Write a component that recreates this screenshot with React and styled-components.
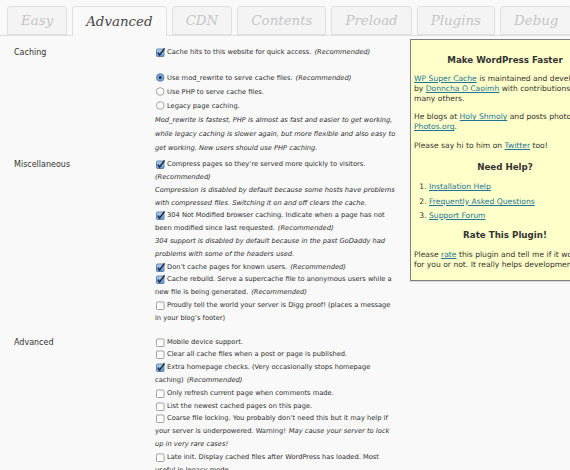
import React from "react";
import styled, { createGlobalStyle } from "styled-components";

const GlobalStyle = createGlobalStyle`
  html, body {
    margin: 0;
    padding: 0;
    overflow: hidden;
    background: #f9f9f9;
  }
  body {
    font-family: "DejaVu Sans", Verdana, sans-serif;
    color: #333;
  }
`;

const tabs = ["Easy", "Advanced", "CDN", "Contents", "Preload", "Plugins", "Debug"];

const Page = styled.div`
  width: 570px;
  height: 470px;
  overflow: hidden;
  background: #f9f9f9;
`;

const TabBar = styled.div`
  display: flex;
  gap: 5px;
  padding: 6px 0 0 7px;
  border-bottom: 1px solid #dfdfdf;
  height: 29px;
  box-sizing: content-box;
`;

const Tab = styled.div`
  box-sizing: border-box;
  height: ${({ $active }) => ($active ? "30px" : "29px")};
  margin-bottom: ${({ $active }) => ($active ? "-1px" : "0")};
  padding: 0 ${({ $pad }) => $pad}px;
  display: flex;
  align-items: center;
  border: 1px solid #dfdfdf;
  border-bottom: ${({ $active }) => ($active ? "none" : "1px solid #dfdfdf")};
  border-radius: 3px 3px 0 0;
  background: ${({ $active }) => ($active ? "#f9f9f9" : "#f4f4f4")};
  font-family: "DejaVu Serif", Georgia, serif;
  font-style: italic;
  font-size: 13.4px;
  color: ${({ $active }) => ($active ? "#464646" : "#c5c5c5")};
  white-space: nowrap;
`;

const Body = styled.div`
  display: flex;
  align-items: flex-start;
`;

const Settings = styled.div`
  width: 410px;
  flex-shrink: 0;
  padding-top: 10px;
`;

const Section = styled.div`
  display: flex;
  margin-top: ${({ $space }) => $space}px;
`;

const Label = styled.div`
  width: 155px;
  flex-shrink: 0;
  box-sizing: border-box;
  padding-left: 14px;
  font-size: 8px;
  line-height: 13px;
  color: #333;
`;

const Content = styled.div`
  flex: 1;
  font-size: 6.7px;
  color: #2e2e2e;
`;

const Group = styled.div`
  margin-top: ${({ $space = 0 }) => $space}px;
`;

const Line = styled.div`
  white-space: nowrap;
  line-height: ${({ $h = 12.8 }) => $h}px;
  height: ${({ $h = 12.8 }) => $h}px;
  display: flex;
  align-items: center;
`;

const Em = styled.em`
  font-style: italic;
  margin-left: ${({ $gap = 0 }) => $gap}px;
`;

const BoxWrap = styled.span`
  display: inline-block;
  width: 9px;
  height: 9px;
  margin-right: 2px;
  margin-left: 1px;
  flex-shrink: 0;
`;

const Checkbox = ({ checked }) => (
  <BoxWrap>
    <svg width="9" height="9" viewBox="0 0 9 9">
      <defs>
        <linearGradient id="cbblue" x1="0" y1="0" x2="0" y2="1">
          <stop offset="0" stopColor="#b9d4f0" />
          <stop offset="1" stopColor="#5d95d4" />
        </linearGradient>
      </defs>
      <rect
        x="0.5"
        y="1"
        width="7.5"
        height="7.5"
        rx="1"
        fill={checked ? "url(#cbblue)" : "#fff"}
        stroke={checked ? "#4e6e98" : "#8a8a8a"}
        strokeWidth="0.8"
      />
      {checked && (
        <path d="M1.8 4.6 L3.6 7 L8.6 0.3" fill="none" stroke="#1d2c45" strokeWidth="1.5" />
      )}
    </svg>
  </BoxWrap>
);

const Radio = ({ checked }) => (
  <BoxWrap>
    <svg width="9" height="9" viewBox="0 0 9 9">
      <circle
        cx="4.2"
        cy="4.5"
        r="3.8"
        fill={checked ? "#7aa9df" : "#fff"}
        stroke={checked ? "#4e6e98" : "#8a8a8a"}
        strokeWidth="0.8"
      />
      {checked && <circle cx="4.2" cy="4.5" r="1.5" fill="#1d2c45" />}
    </svg>
  </BoxWrap>
);

const Sidebar = styled.div`
  margin-top: 3px;
  width: 190px;
  flex-shrink: 0;
  box-sizing: border-box;
  background: #ffffc9;
  border: 1px solid #808080;
  box-shadow: 0 1px 1px rgba(0, 0, 0, 0.12);
  padding: 1px 3px 10px 3px;
  font-size: 7.6px;
  line-height: 10px;
  color: #333;
  white-space: nowrap;
`;

const Heading = styled.h3`
  margin: ${({ $top }) => $top}px 0 0;
  text-align: center;
  font-size: 8.7px;
  line-height: 12px;
  font-weight: bold;
  color: #333;
`;

const Para = styled.p`
  margin: ${({ $top = 8.5 }) => $top}px 0 0;
`;

const Link = styled.a`
  color: #21759b;
  text-decoration: underline;
`;

const HelpList = styled.ol`
  margin: 9px 0 0;
  padding-left: 15px;
`;

const HelpItem = styled.li`
  line-height: 10px;
  margin-bottom: 4.2px;
`;

const App = () => {
  return (
    <Page>
      <GlobalStyle />
      <TabBar>
        {tabs.map((t) => (
          <Tab key={t} $active={t === "Advanced"} $pad={13}>
            {t}
          </Tab>
        ))}
      </TabBar>
      <Body>
        <Settings>
          <Section $space={0}>
            <Label>Caching</Label>
            <Content>
              <Line $h={13}>
                <Checkbox checked />
                Cache hits to this website for quick access.
                <Em $gap={3}>(Recommended)</Em>
              </Line>
              <Group $space={11.5}>
                <Line $h={14}>
                  <Radio checked />
                  Use mod_rewrite to serve cache files.
                  <Em $gap={3}>(Recommended)</Em>
                </Line>
                <Line $h={14}>
                  <Radio />
                  Use PHP to serve cache files.
                </Line>
                <Line $h={14}>
                  <Radio />
                  Legacy page caching.
                </Line>
                <Line $h={14}>
                  <Em>Mod_rewrite is fastest, PHP is almost as fast and easier to get working,</Em>
                </Line>
                <Line $h={14}>
                  <Em>while legacy caching is slower again, but more flexible and also easy to</Em>
                </Line>
                <Line $h={14}>
                  <Em>get working. New users should use PHP caching.</Em>
                </Line>
              </Group>
            </Content>
          </Section>

          <Section $space={3.8}>
            <Label>Miscellaneous</Label>
            <Content>
              <Line>
                <Checkbox checked />
                Compress pages so they’re served more quickly to visitors.
              </Line>
              <Line>
                <Em>(Recommended)</Em>
              </Line>
              <Line>
                <Em>Compression is disabled by default because some hosts have problems</Em>
              </Line>
              <Line>
                <Em>with compressed files. Switching it on and off clears the cache.</Em>
              </Line>
              <Line>
                <Checkbox checked />
                304 Not Modified browser caching. Indicate when a page has not
              </Line>
              <Line>
                been modified since last requested.
                <Em $gap={3}>(Recommended)</Em>
              </Line>
              <Line>
                <Em>304 support is disabled by default because in the past GoDaddy had</Em>
              </Line>
              <Line>
                <Em>problems with some of the headers used.</Em>
              </Line>
              <Line>
                <Checkbox checked />
                Don’t cache pages for known users.
                <Em $gap={3}>(Recommended)</Em>
              </Line>
              <Line>
                <Checkbox checked />
                Cache rebuild. Serve a supercache file to anonymous users while a
              </Line>
              <Line>
                new file is being generated.
                <Em $gap={3}>(Recommended)</Em>
              </Line>
              <Line>
                <Checkbox />
                Proudly tell the world your server is Digg proof! (places a message
              </Line>
              <Line>in your blog’s footer)</Line>
            </Content>
          </Section>

          <Section $space={11}>
            <Label>Advanced</Label>
            <Content>
              <Line>
                <Checkbox />
                Mobile device support.
              </Line>
              <Line>
                <Checkbox />
                Clear all cache files when a post or page is published.
              </Line>
              <Line>
                <Checkbox checked />
                Extra homepage checks. (Very occasionally stops homepage
              </Line>
              <Line>
                caching)
                <Em $gap={3}>(Recommended)</Em>
              </Line>
              <Line>
                <Checkbox />
                Only refresh current page when comments made.
              </Line>
              <Line>
                <Checkbox />
                List the newest cached pages on this page.
              </Line>
              <Line>
                <Checkbox />
                Coarse file locking. You probably don’t need this but it may help if
              </Line>
              <Line>
                your server is underpowered. Warning!
                <Em $gap={3}>May cause your server to lock</Em>
              </Line>
              <Line>
                <Em>up in very rare cases!</Em>
              </Line>
              <Line>
                <Checkbox />
                Late init. Display cached files after WordPress has loaded. Most
              </Line>
              <Line>useful in legacy mode.</Line>
            </Content>
          </Section>
        </Settings>

        <Sidebar>
          <Heading $top={12.6}>Make WordPress Faster</Heading>
          <Para $top={8.4}>
            <Link>WP Super Cache</Link> is maintained and developed
            <br />
            by <Link>Donncha O Caoimh</Link> with contributions from
            <br />
            many others.
          </Para>
          <Para>
            He blogs at <Link>Holy Shmoly</Link> and posts photos at{" "}
            <Link>In</Link>
            <br />
            <Link>Photos.org</Link>.
          </Para>
          <Para>
            Please say hi to him on <Link>Twitter</Link> too!
          </Para>
          <Heading $top={10.4}>Need Help?</Heading>
          <HelpList>
            <HelpItem>
              <Link>Installation Help</Link>
            </HelpItem>
            <HelpItem>
              <Link>Frequently Asked Questions</Link>
            </HelpItem>
            <HelpItem>
              <Link>Support Forum</Link>
            </HelpItem>
          </HelpList>
          <Heading $top={8}>Rate This Plugin!</Heading>
          <Para $top={9.7}>
            Please <Link>rate</Link> this plugin and tell me if it works
            <br />
            for you or not. It really helps development.
          </Para>
        </Sidebar>
      </Body>
    </Page>
  );
};

export default App;
